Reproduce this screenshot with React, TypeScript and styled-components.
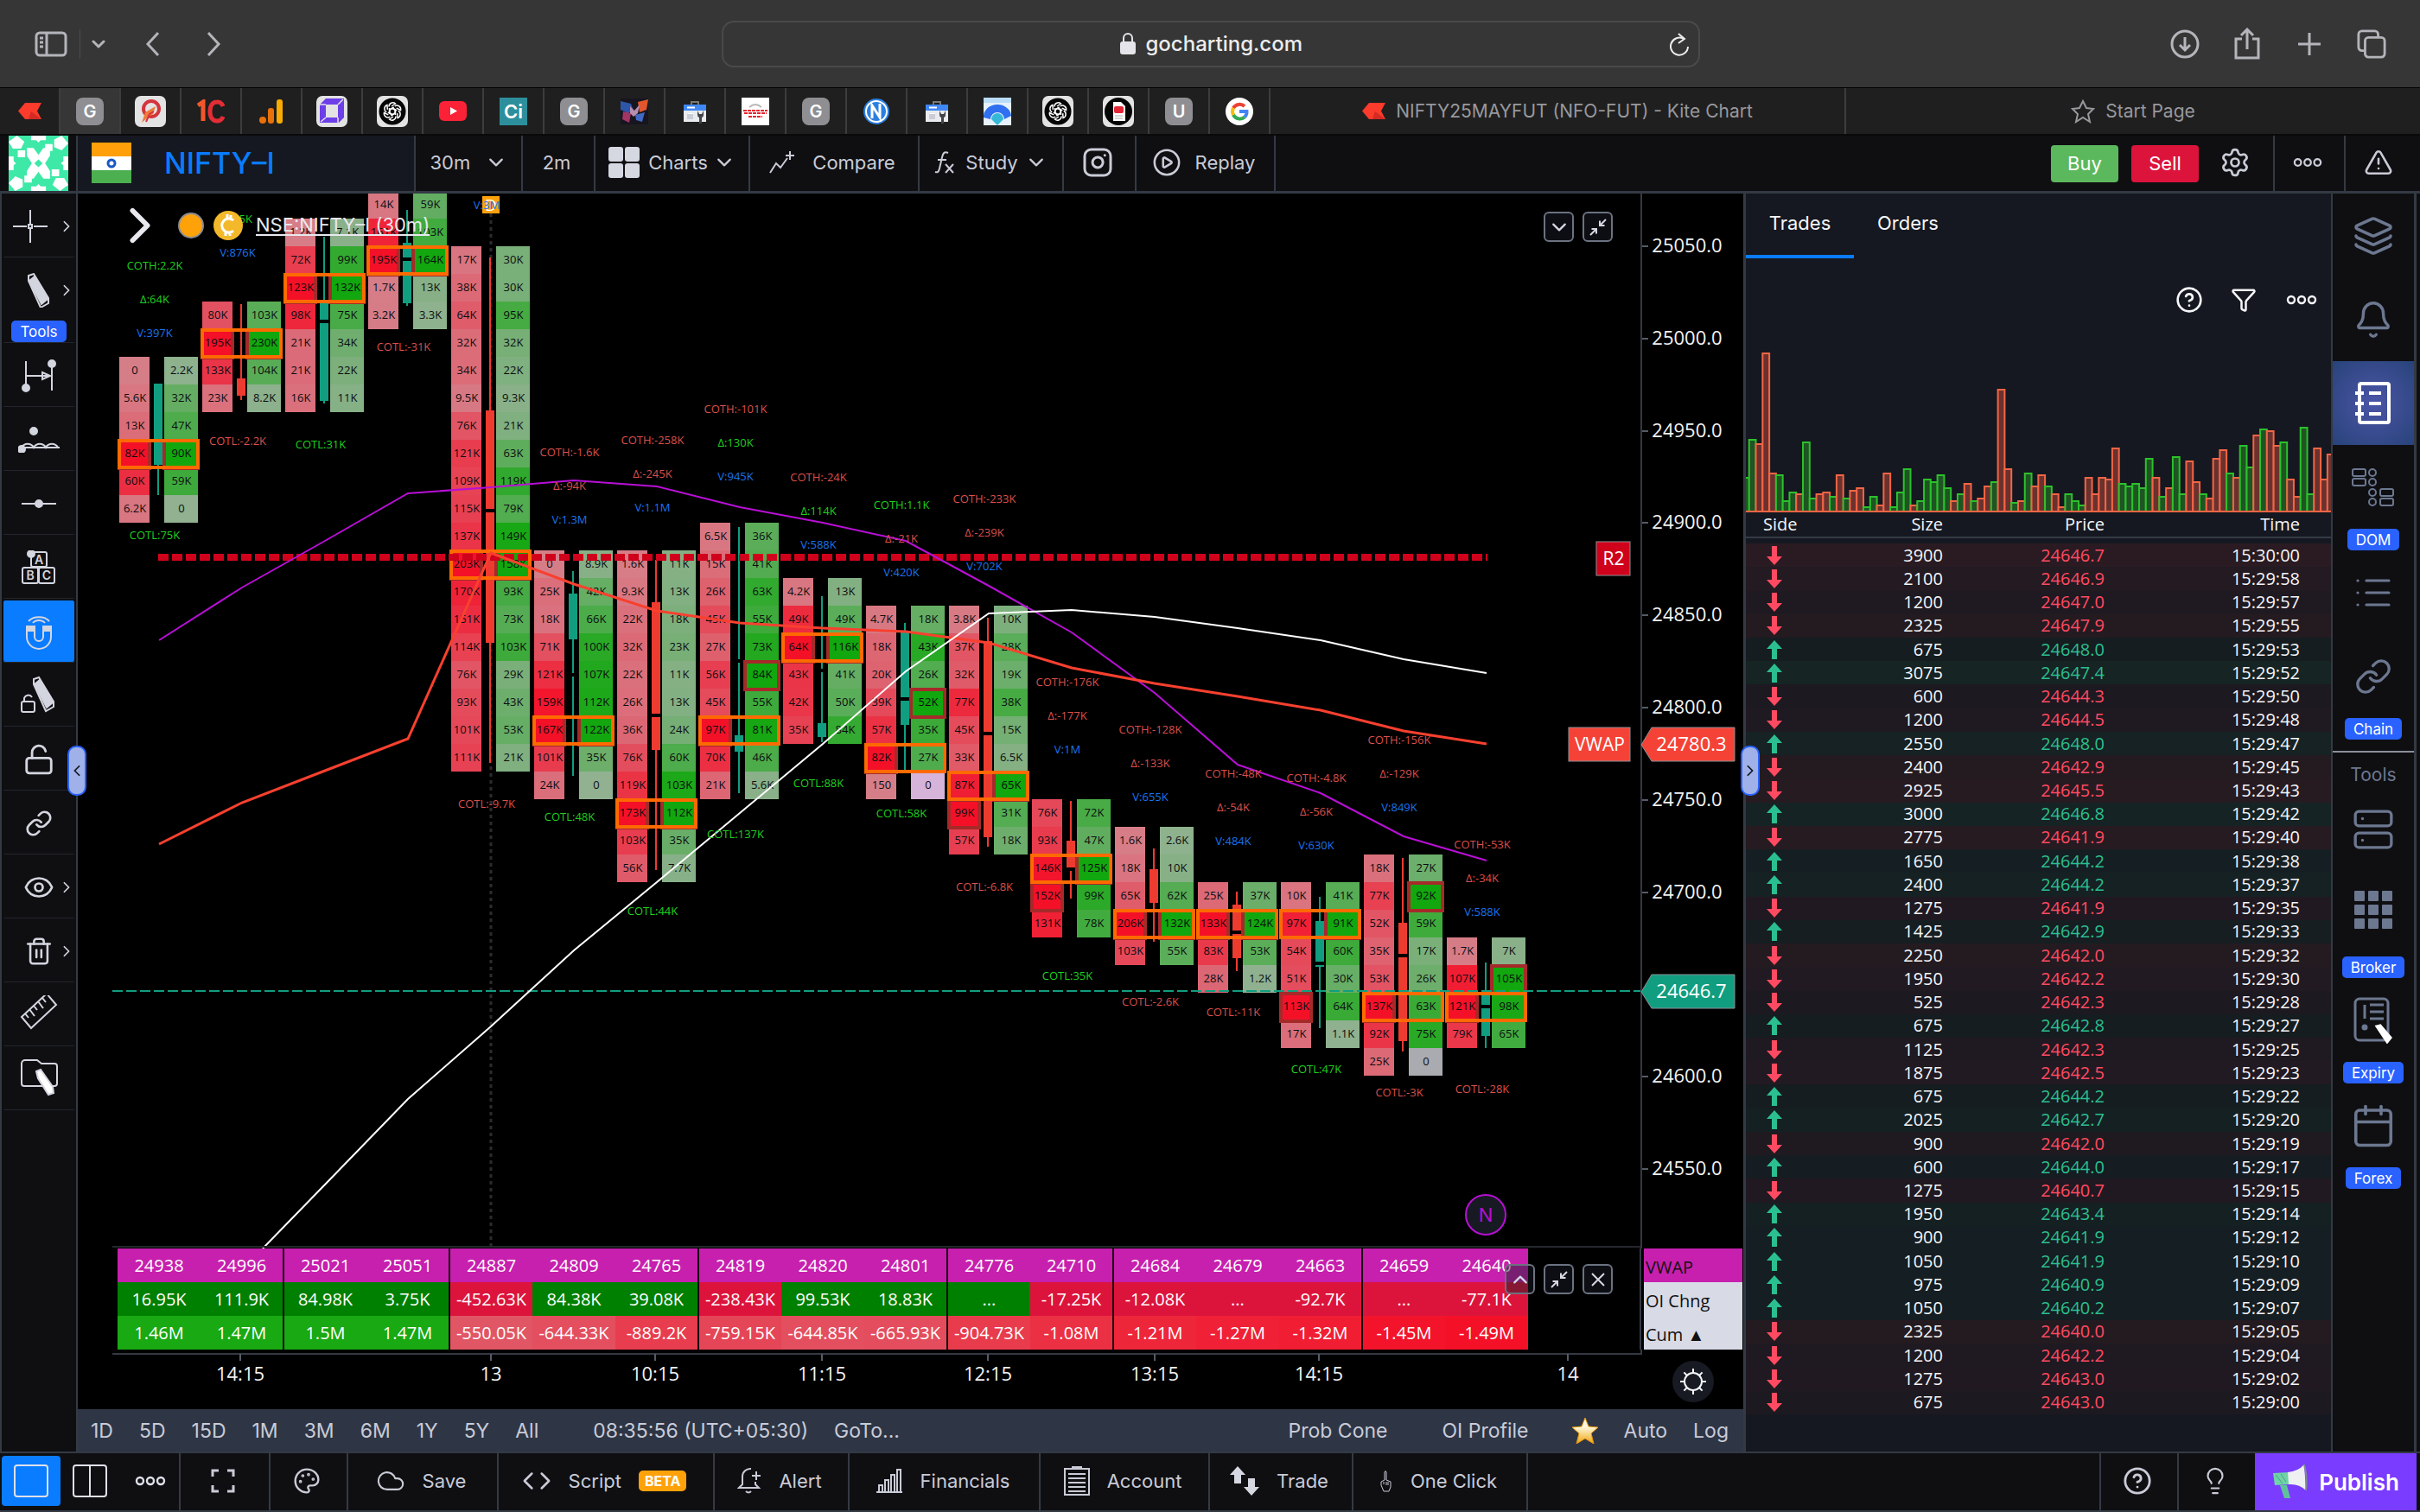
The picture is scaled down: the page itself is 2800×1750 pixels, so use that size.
import React from 'react';
import styled, { createGlobalStyle } from 'styled-components';
import {
  Eye, Trash2, Link, LockOpen, Layers, Bell, List, Server, Calendar, Lightbulb, CircleHelp,
  Funnel, Palette, Cloud, Code, CirclePlay, Settings, TriangleAlert, Instagram,
} from 'lucide-react';

/* ---------- theme ---------- */

const ui = '"Inter", "Liberation Sans", sans-serif';
const data = '"Open Sans", "Noto Sans", sans-serif';

const c = {
  chrome: '#363636',
  tabs: '#1f1f1f',
  panel: '#0f0f12',
  surface: '#151820',
  line: '#343a44',
  thin: '#22262c',
  text: '#c9cbd6',
  white: '#f4f5f8',
  accent: '#0a7cff',
  badge: '#2962ff',
  teal: '#119e80',
  candleRed: '#ee3b30',
  up: '#2bbf8f',
  down: '#ff4a61',
  magenta: '#c71fae',
  orange: '#ff6a00',
  brown: '#a52a2a',
  muted: '#6c7890',
};

const Global = createGlobalStyle`
  * { box-sizing: border-box; }
  body { margin: 0; background: #000; color: ${c.text}; font-family: ${ui}; }
  button, select, input { font: inherit; color: inherit; background: none; border: 0; margin: 0; padding: 0; outline: none; }
  a { color: inherit; text-decoration: none; }
  svg { display: block; }
`;

/* ---------- page frame ---------- */

const Shell = styled.div`
  display: flex;
  flex-direction: column;
  min-height: 100vh;
  background: ${c.panel};
`;

const Workspace = styled.div`
  display: grid;
  grid-template-columns: 90px minmax(0, 1fr) 682px 101px;
  border-top: 3px solid ${c.line};
  flex: 1;
`;

/* ---------- browser chrome ---------- */

const BrowserBar = styled.header`
  display: grid;
  grid-template-columns: 1fr 1132px 1fr;
  align-items: center;
  height: 101px;
  padding: 0 39px 0 40px;
  background: ${c.chrome};
  color: #b4b5ba;
`;

const BarGroup = styled.div<{ $end?: boolean }>`
  display: flex;
  align-items: center;
  justify-content: ${p => (p.$end ? 'flex-end' : 'flex-start')};
  gap: ${p => (p.$end ? 38 : 0)}px;
`;

const BarButton = styled.button<{ $w?: number }>`
  display: flex;
  align-items: center;
  justify-content: center;
  width: ${p => p.$w ?? 34}px;
`;

const BarRule = styled.span`
  width: 1px;
  height: 34px;
  margin: 0 8px 0 14px;
  background: #4c4c4e;
`;

const AddressBox = styled.label`
  display: flex;
  align-items: center;
  height: 54px;
  padding: 0 8px 0 12px;
  border: 2px solid #4a4a4a;
  border-radius: 14px;
  color: #ececee;
`;

const AddressCenter = styled.span`
  display: flex;
  align-items: center;
  justify-content: center;
  gap: 12px;
  flex: 1;
  padding-left: 32px;
`;

const AddressInput = styled.input`
  width: 190px;
  font-size: 24px;
  font-weight: 500;
  line-height: 32px;
`;

const TabStrip = styled.nav`
  display: flex;
  height: 56px;
  border-top: 1px solid #000;
  border-bottom: 2px solid #0a0a0b;
  background: ${c.tabs};
  color: #98989d;
`;

const IconTab = styled.a<{ $on?: boolean }>`
  display: flex;
  flex: 0 0 70px;
  align-items: center;
  justify-content: center;
  border-right: 2px solid #3d3d3f;
  background: ${p => (p.$on ? c.chrome : 'transparent')};
`;

const WideTab = styled.a`
  display: flex;
  flex: 1;
  align-items: center;
  justify-content: center;
  gap: 12px;
  border-right: 2px solid #3d3d3f;
  font-size: 21px;
  &:last-child { border-right: 0; }
`;

const LetterIcon = styled.span<{ $bg: string; $r?: number; $fg?: string; $size?: number }>`
  display: flex;
  align-items: center;
  justify-content: center;
  width: 32px;
  height: 32px;
  border-radius: ${p => p.$r ?? 8}px;
  background: ${p => p.$bg};
  color: ${p => p.$fg ?? '#fff'};
  font-size: ${p => p.$size ?? 20}px;
  font-weight: 600;
`;

/* ---------- app top bar ---------- */

const TopBar = styled.div`
  display: flex;
  height: 64px;
  border-right: 6px solid ${c.panel};
`;

const AvatarCell = styled.div`
  display: flex;
  justify-content: center;
  width: 90px;
  border-right: 2px solid ${c.line};
`;

const SymbolButton = styled.button`
  display: flex;
  align-items: center;
  gap: 38px;
  width: 389px;
  padding: 0 0 2px 16px;
  background: ${c.surface};
  color: ${c.accent};
  font-size: 34px;
  font-weight: 500;
`;

const cellCss = `
  display: flex;
  align-items: center;
  justify-content: center;
  border: 0 solid ${c.line};
  font-size: 22px;
  color: ${c.text};
  white-space: nowrap;
`;

const BarCell = styled.button<{ $w: number; $gap?: number; $plain?: boolean }>`
  ${cellCss}
  flex: 0 0 ${p => p.$w}px;
  gap: ${p => p.$gap ?? 20}px;
  padding: 0 4px 3px 0;
  border-left-width: ${p => (p.$plain ? 0 : 2)}px;
`;

const SelectCell = styled.label`
  ${cellCss}
  flex: 0 0 124px;
  gap: 20px;
  padding: 0 4px 3px 0;
  border-left-width: 2px;
`;

const IntervalSelect = styled.select`
  appearance: none;
`;

const Spacer = styled.div<{ $rule?: boolean }>`
  flex: 1;
  border-left: ${p => (p.$rule ? `2px solid ${c.line}` : '0')};
`;

const OrderGroup = styled.div`
  display: flex;
  align-items: center;
  gap: 15px;
  padding-right: 2px;
`;

const OrderButton = styled.button<{ $bg: string }>`
  width: 78px;
  height: 43px;
  border-radius: 4px;
  background: ${p => p.$bg};
  color: #fff;
  font-size: 22px;
`;

/* ---------- left tool rail ---------- */

const ToolRail = styled.nav`
  display: flex;
  flex-direction: column;
  border-left: 2px solid ${c.line};
  border-right: 2px solid ${c.line};
`;

const ToolCell = styled.button<{ $on?: boolean; $tall?: boolean }>`
  display: grid;
  grid-template-columns: 1fr 44px 1fr;
  grid-template-rows: ${p => (p.$tall ? '1fr 25px' : '1fr')};
  align-items: center;
  justify-items: center;
  height: ${p => (p.$tall ? 99 : 74)}px;
  border: 2px solid ${c.panel};
  border-bottom: 1px solid ${c.thin};
  border-radius: 4px;
  background: ${p => (p.$on ? c.accent : 'transparent')};
  color: #d3d5df;
`;

const Badge = styled.span<{ $span?: boolean }>`
  display: flex;
  align-items: center;
  justify-content: center;
  height: 25px;
  padding: 0 10px;
  border-radius: 5px;
  background: ${c.badge};
  color: #fff;
  font-size: 17px;
  ${p => (p.$span ? 'grid-column: 1 / -1;' : '')}
`;

/* ---------- chart ---------- */

const ChartColumn = styled.section`
  position: relative;
  display: flex;
  flex-direction: column;
  background: #000;
`;

const Plot = styled.svg`
  width: 100%;
  height: auto;
  font-family: ${data};
`;

const ChartLegend = styled.div`
  position: absolute;
  top: 14px;
  left: 49px;
  display: flex;
  align-items: center;
  height: 46px;
  gap: 10px;
  color: #e8e9ef;
  font-size: 22px;
`;

const LegendToggle = styled.button`
  margin-right: 11px;
`;

const LegendLink = styled.a`
  margin-left: 4px;
  border-bottom: 2px solid #e8e9ef;
  line-height: 22px;
  color: #e8e9ef;
`;

const PaneButtons = styled.div<{ $top: number }>`
  position: absolute;
  top: ${p => p.$top}px;
  right: 151px;
  display: flex;
  gap: 10px;
`;

const PaneButton = styled.button`
  display: flex;
  align-items: center;
  justify-content: center;
  width: 35px;
  height: 35px;
  border: 2px solid #6b7280;
  border-radius: 6px;
  background: rgba(27, 32, 42, 0.45);
  color: #d5d8e2;
`;

const RoundButton = styled.button<{ $top: number; $right: number; $note?: boolean }>`
  position: absolute;
  top: ${p => p.$top}px;
  right: ${p => p.$right}px;
  display: flex;
  align-items: center;
  justify-content: center;
  width: 48px;
  height: 48px;
  border: ${p => (p.$note ? '2px solid #b60fd2' : '0')};
  border-radius: 50%;
  background: #171a22;
  color: ${p => (p.$note ? '#b60fd2' : c.white)};
  font-size: 22px;
`;

const Handle = styled.button<{ $side: 'left' | 'right' }>`
  position: absolute;
  top: 639px;
  ${p => p.$side}: ${p => (p.$side === 'left' ? -12 : -19)}px;
  z-index: 2;
  display: flex;
  align-items: center;
  justify-content: center;
  width: 22px;
  height: 58px;
  border: 2px solid ${c.badge};
  border-radius: 10px;
  background: #9fb1e8;
  color: #10131a;
`;

const Strip = styled.div`
  display: flex;
  padding-left: 46px;
`;

const StripTable = styled.table`
  width: 1632px;
  table-layout: fixed;
  border-collapse: collapse;
  font-family: ${data};
  font-size: 20px;
  color: #fff;
`;

const StripCell = styled.td<{ $bg: string; $cut?: boolean }>`
  height: 39px;
  padding: 0;
  text-align: center;
  background: ${p => p.$bg};
  border-right: ${p => (p.$cut ? '2px solid #16060f' : '0')};
`;

const StripGap = styled.div`
  flex: 1;
  border-right: 2px solid ${c.line};
`;

const StripLegend = styled.div`
  width: 118px;
  padding: 0 1px 0 3px;
  font-family: ${data};
  font-size: 20px;
  color: #111;
`;

const StripLabel = styled.div<{ $bg: string }>`
  height: 39px;
  padding: 4px 0 0 2px;
  background: ${p => p.$bg};
  line-height: 35px;
`;

const RangeBar = styled.div`
  display: flex;
  align-items: center;
  height: 49px;
  padding: 0 17px 0 15px;
  background: #2e3646;
  gap: 30px;
`;

const RangeButton = styled.button<{ $before?: number }>`
  margin-left: ${p => p.$before ?? 0}px;
  font-size: 23px;
  line-height: 28px;
  color: ${c.text};
  white-space: nowrap;
`;

/* ---------- trades panel ---------- */

const TradesPanel = styled.section`
  display: flex;
  flex-direction: column;
  border-left: 3px solid ${c.line};
  border-right: 2px solid ${c.line};
  background: ${c.surface};
  color: ${c.white};
`;

const PanelTabs = styled.div`
  display: flex;
  height: 75px;
`;

const PanelTab = styled.button<{ $on?: boolean }>`
  width: 125px;
  padding-bottom: 4px;
  border-bottom: 4px solid ${p => (p.$on ? c.accent : 'transparent')};
  font-size: 22px;
`;

const PanelActions = styled.div`
  display: flex;
  justify-content: flex-end;
  align-items: center;
  gap: 32px;
  height: 96px;
  padding-right: 14px;
`;

const ActionButton = styled.button``;

const Histogram = styled.svg`
  width: 100%;
  height: auto;
`;

const TradesTable = styled.table`
  width: 100%;
  height: 1044px;
  table-layout: fixed;
  border-collapse: collapse;
  font-family: ${data};
`;

const HeadCell = styled.th<{ $w: number; $align: string; $pad?: number }>`
  width: ${p => p.$w}px;
  height: 29px;
  padding: 0 ${p => p.$pad ?? 0}px 0 20px;
  border-bottom: 2px solid ${c.line};
  text-align: ${p => p.$align};
  font-size: 20px;
  font-weight: 400;
  line-height: 26px;
`;

const TradeBody = styled.tbody`
  &::before {
    content: '';
    display: table-row;
    height: 7px;
  }
`;

const TradeRow = styled.tr<{ $buy: boolean; $a: number }>`
  height: 27px;
  background: rgba(${p => (p.$buy ? '38, 166, 91' : '255, 70, 60')}, ${p => p.$a});
`;

const TradeCell = styled.td<{ $color?: string; $pad?: number; $left?: boolean }>`
  padding: 0 ${p => p.$pad ?? 0}px 0 ${p => (p.$left ? 24 : 0)}px;
  text-align: ${p => (p.$left ? 'left' : 'right')};
  color: ${p => p.$color ?? c.white};
  font-size: 20px;
  line-height: 26px;
`;

/* ---------- right rail ---------- */

const SideRail = styled.nav`
  display: flex;
  flex-direction: column;
  align-items: stretch;
  margin-right: 4px;
  border-right: 3px solid ${c.line};
`;

const SideItem = styled.button<{ $after?: number; $gap?: number }>`
  display: flex;
  flex-direction: column;
  align-items: center;
  gap: ${p => p.$gap ?? 0}px;
  padding-bottom: ${p => p.$after ?? 0}px;
  color: ${c.muted};
`;

const SideIcon = styled.span<{ $on?: boolean; $short?: boolean }>`
  display: flex;
  align-items: center;
  justify-content: center;
  width: 100%;
  height: ${p => (p.$short ? 93 : 97)}px;
  color: ${p => (p.$on ? '#fff' : 'inherit')};
  background: ${p => (p.$on ? 'radial-gradient(circle, #4a55a8 0%, #3c4d92 45%, #27437a 100%)' : 'none')};
`;

const SideHeading = styled.div`
  height: 44px;
  border-top: 2px solid #8a8f9a;
  color: ${c.muted};
  font-size: 21px;
  line-height: 52px;
  text-align: center;
`;

/* ---------- bottom bar ---------- */

const BottomBar = styled.footer`
  display: flex;
  height: 70px;
  border-top: 2px solid ${c.line};
  border-bottom: 2px solid ${c.line};
  padding-right: 4px;
`;

const LayoutGroup = styled.div`
  display: flex;
  align-items: center;
  gap: 14px;
  width: 207px;
  padding: 0 0 2px 2px;
`;

const LayoutButton = styled.button<{ $on?: boolean }>`
  display: flex;
  align-items: center;
  justify-content: center;
  width: ${p => (p.$on ? 68 : 40)}px;
  height: 58px;
  border-radius: 4px;
  background: ${p => (p.$on ? c.accent : 'transparent')};
  color: #dfe1ea;
  & + & + & { margin-left: 16px; }
`;

const BetaTag = styled.span`
  padding: 0 7px;
  border-radius: 5px;
  background: #ffa20a;
  color: #fff;
  font-size: 16px;
  font-weight: 700;
  line-height: 24px;
`;

const PublishButton = styled.button`
  display: flex;
  align-items: center;
  justify-content: center;
  gap: 12px;
  flex: 0 0 187px;
  background: #7a3cff;
  color: #fff;
  font-size: 26px;
  font-weight: 600;
`;

/* ---------- small drawings ---------- */

const Chevron = ({ dir = 'down', size = 16, w = 2 }: { dir?: 'down' | 'right' | 'left' | 'up'; size?: number; w?: number }) => {
  const d = { down: 'M2 5l6 6 6-6', up: 'M2 11l6-6 6 6', right: 'M5 2l6 6-6 6', left: 'M11 2l-6 6 6 6' }[dir];
  return (
    <svg width={size} height={size} viewBox="0 0 16 16" fill="none" stroke="currentColor" strokeWidth={w} strokeLinecap="round" strokeLinejoin="round">
      <path d={d} />
    </svg>
  );
};

const Dots = ({ size = 34 }: { size?: number }) => (
  <svg width={size} height="12" viewBox="0 0 36 12" fill="none" stroke="currentColor" strokeWidth="2.4">
    <circle cx="6" cy="6" r="4" /><circle cx="18" cy="6" r="4" /><circle cx="30" cy="6" r="4" />
  </svg>
);

const KiteMark = () => (
  <svg width="27" height="19" viewBox="0 0 27 19"><path d="M8 0h19l-5 9.500L27 19H8L0 9.500z" fill="#fb3b2b" /><path d="M15 10l12 9H12z" fill="#d42a22" /></svg>
);

const Collapse = () => (
  <svg width="22" height="22" viewBox="0 0 22 22" fill="none" stroke="currentColor" strokeWidth="2">
    <path d="M20 2l-7 7M13 3.500V9h5.500M2 20l7-7M9 18.500V13H3.500" />
  </svg>
);

const OpenAi = ({ rays = 6 }: { rays?: number }) => (
  <svg width="36" height="36" viewBox="0 0 36 36">
    <rect width="36" height="36" rx="7" fill="#e3e3e3" /><circle cx="18" cy="18" r="15.500" fill="#050505" />
    <g fill="none" stroke="#fff" strokeWidth="1.500">
      {Array.from({ length: rays }, (_, i) => (
        <path key={i} transform={`rotate(${i * 60} 18 18)`} d="M18 14.500l3.500 2V22M14 12.500a4.500 4.500 0 0 1 7.500-3.500l-4.500 3" />
      ))}
    </g>
  </svg>
);

const StoreMark = () => (
  <svg width="28" height="28" viewBox="0 0 28 28">
    <path d="M10 6V3h8v3" fill="none" stroke="#777" strokeWidth="2" />
    <rect x="1" y="6" width="26" height="20" fill="#e9ebee" /><rect x="1" y="6" width="26" height="7" fill="#3f87f5" />
    <path d="M5 9.500h9M6 17h6M6 20h6" stroke="#fff" strokeWidth="2" /><path d="M5 17v6h7v-6z" fill="#c9ced6" />
    <path d="M17 13v5a3 3 0 0 0 2 3v7h3v-7a3 3 0 0 0 2-3v-5l-2 4h-3z" fill="#404347" />
  </svg>
);

const Avatar = () => (
  <svg width="69" height="64" viewBox="0 0 72 72" preserveAspectRatio="none">
    <rect width="72" height="72" fill="#3ee9a8" />
    {[0, 90, 180, 270].map(r => (
      <g key={r} transform={`rotate(${r} 36 36)`} fill="#fff">
        <path d="M10 0l9 8-4 9H5L0 8zM27 0h18v6H27zM2 30l7 6-7 6zM11 19h9v9h-9z" />
      </g>
    ))}
    <path d="M22 16h8l6 9 6-9h8v10l-6 10 6 10v10h-8l-6-9-6 9h-8V46l6-10-6-10z" fill="#fff" />
    <path d="M36 31l5 5-5 5-5-5z" fill="#3ee9a8" />
  </svg>
);

/* ---------- favicon tabs ---------- */

const favicons: { name: string; icon: React.ReactNode }[] = [
  { name: 'Kite', icon: <KiteMark /> },
  { name: 'GoCharting', icon: <LetterIcon $bg="#8e8e93">G</LetterIcon> },
  { name: 'Moneycontrol', icon: (
    <svg width="36" height="36" viewBox="0 0 36 36"><rect width="36" height="36" rx="7" fill="#e3e3e3" />
      <circle cx="19" cy="15" r="9" fill="none" stroke="#d5343c" strokeWidth="4" /><path d="M8 31l4-12 12-7-3 9-5 3z" fill="#f07a3a" /><path d="M13 30l4-9 5-3" stroke="#d5343c" strokeWidth="2" fill="none" /></svg>) },
  { name: 'Chart', icon: (
    <svg width="32" height="28" viewBox="0 0 32 28" fill="none" strokeWidth="5"><path d="M1 7l6-4v22" stroke="#f2572b" /><path d="M30 8a7 7 0 0 0-7-5c-5 0-8 4-8 11s3 11 8 11a7 7 0 0 0 7-5" stroke="#e42d35" /></svg>) },
  { name: 'Analytics', icon: (
    <svg width="28" height="30" viewBox="0 0 28 30"><rect x="20" y="1" width="7" height="28" rx="3" fill="#f9ab00" /><rect x="10" y="11" width="7" height="18" rx="3" fill="#e8710a" /><circle cx="4" cy="25" r="4" fill="#e8710a" /></svg>) },
  { name: 'Box', icon: (
    <svg width="36" height="36" viewBox="0 0 36 36"><rect width="36" height="36" rx="7" fill="#e3e3e3" /><path d="M11 3h21v22l-6 6H4V10z" fill="#6d3fe8" /><path d="M11 10h14v15H11z" fill="#e3e3e3" /><path d="M4 10l7 0M25 25v6M11 25l-6 5M25 10l6-6" stroke="#e3e3e3" strokeWidth="1.500" /></svg>) },
  { name: 'Chat', icon: <OpenAi /> },
  { name: 'YouTube', icon: (
    <svg width="32" height="23" viewBox="0 0 32 23"><rect width="32" height="23" rx="6" fill="#fb2137" /><path d="M13 7l8 4.500-8 4.500z" fill="#fff" /></svg>) },
  { name: 'Ci', icon: <LetterIcon $bg="#2d8f9c" $r={0} $size={22}>Ci</LetterIcon> },
  { name: 'G', icon: <LetterIcon $bg="#8e8e93">G</LetterIcon> },
  { name: 'Game', icon: (
    <svg width="32" height="30" viewBox="0 0 32 30"><rect width="32" height="30" fill="#17151f" /><path d="M0 3l12 3 3 8-6 3-9-4z" fill="#2d56a8" /><path d="M20 4l12-3-2 12-8 3z" fill="#e0572e" /><path d="M3 15l9 2-2 11-8-4z" fill="#a33565" /><path d="M17 19l11-3-3 11-7-2z" fill="#4069c4" /><path d="M11 9l5 5 6-7-2 10-5 4-4-4z" fill="#b78db0" /></svg>) },
  { name: 'Store', icon: <StoreMark /> },
  { name: 'Job', icon: (
    <svg width="32" height="32" viewBox="0 0 32 32"><rect width="32" height="32" fill="#fff" /><path d="M9 11q7-6 14 0" stroke="#b9b9b9" strokeWidth="2" fill="none" /><path d="M2 15h28M3 18h26M8 22h16" stroke="#e5242c" strokeWidth="2" strokeDasharray="4 1" /></svg>) },
  { name: 'G', icon: <LetterIcon $bg="#8e8e93">G</LetterIcon> },
  { name: 'N', icon: (
    <svg width="32" height="32" viewBox="0 0 32 32"><circle cx="16" cy="16" r="15" fill="#2b7fe0" /><circle cx="16" cy="16" r="12" fill="none" stroke="#fff" strokeWidth="2" /><path d="M11 24V9l9 14V7" fill="none" stroke="#fff" strokeWidth="3" /></svg>) },
  { name: 'Store', icon: <StoreMark /> },
  { name: 'Weather', icon: (
    <svg width="32" height="32" viewBox="0 0 32 32"><rect width="32" height="32" fill="#e6f1fb" /><path d="M0 0h32v6H0z" fill="#b9dcf8" /><path d="M0 23a16 14 0 0 1 32-2l-8 4a8 8 0 0 0-16 0z" fill="#2f6ff0" /><path d="M9 25a7 7 0 0 1 14 0l-7 7z" fill="#35b8d8" /></svg>) },
  { name: 'Chat', icon: <OpenAi /> },
  { name: 'Document', icon: (
    <svg width="36" height="36" viewBox="0 0 36 36"><rect width="36" height="36" rx="7" fill="#e3e3e3" /><circle cx="18" cy="18" r="16" fill="#050505" /><path d="M12 7h9l5 5v17H12z" fill="#fff" /><rect x="13" y="12" width="11" height="8" rx="2" fill="#e32636" /><path d="M14 23h9M14 26h9" stroke="#aaa" /></svg>) },
  { name: 'U', icon: <LetterIcon $bg="#8e8e93">U</LetterIcon> },
  { name: 'Google', icon: (
    <svg width="32" height="32" viewBox="0 0 32 32" fill="none" strokeWidth="4"><circle cx="16" cy="16" r="16" fill="#fff" />
      <path d="M22 10a8.500 8.500 0 0 0-13 2" stroke="#ea4335" /><path d="M9 12a8.500 8.500 0 0 0 0 8" stroke="#fbbc05" /><path d="M9 20a8.500 8.500 0 0 0 13 2.500" stroke="#34a853" /><path d="M22 22.500A8 8 0 0 0 24.500 16H16" stroke="#4285f4" /></svg>) },
];

/* ---------- chart data ---------- */

const K = 1000;
type Candle = { up: boolean; high: number; low: number; top: number; bottom: number; gap?: number };
type Bar = {
  row: number; bids: number[]; asks: number[]; candle: Candle;
  noteY?: number; coth?: string; delta?: string; vol?: string; cotl: [string, number];
};

const bars: Bar[] = [
  { row: 4, bids: [0, 5.6, 13, 82, 60, 6.2], asks: [2.2, 32, 47, 90, 59, 0], candle: { up: true, high: 445, low: 573, top: 444, bottom: 538 }, noteY: 308, coth: '2.2K', delta: '64K', vol: '397K', cotl: ['75K', 620] },
  { row: 2, bids: [80, 195, 133, 23], asks: [103, 230, 104, 8.2], candle: { up: false, high: 352, low: 463, top: 438, bottom: 458 }, noteY: 215, delta: '35K', vol: '876K', cotl: ['-2.2K', 511] },
  { row: -1, bids: [1.2, 72, 123, 98, 21, 21, 16], asks: [7.1, 99, 132, 75, 34, 22, 11], candle: { up: true, high: 274, low: 467, top: 350, bottom: 464, gap: 370 }, cotl: ['31K', 515] },
  { row: -2, bids: [14, 161, 195, 1.7, 3.2], asks: [59, 103, 164, 13, 3.3], candle: { up: true, high: 243, low: 354, top: 281, bottom: 351, gap: 298 }, cotl: ['-31K', 402] },
  { row: 0, bids: [17, 38, 64, 32, 34, 9.5, 76, 121, 109, 115, 137, 203, 170, 151, 114, 76, 93, 101, 111], asks: [30, 30, 95, 32, 22, 9.3, 21, 63, 119, 79, 149, 158, 93, 73, 103, 29, 43, 53, 21], candle: { up: false, high: 298, low: 883, top: 475, bottom: 744, gap: 589 }, noteY: 160, vol: '3M', cotl: ['-9.7K', 931] },
  { row: 11, bids: [0, 25, 18, 71, 121, 159, 167, 101, 24], asks: [8.9, 42, 66, 100, 107, 112, 122, 35, 0], candle: { up: true, high: 661, low: 898, top: 687, bottom: 740, gap: 779 }, noteY: 524, coth: '-1.6K', delta: '-94K', vol: '1.3M', cotl: ['48K', 946] },
  { row: 11, bids: [1.6, 9.3, 22, 32, 22, 26, 36, 76, 119, 173, 103, 56], asks: [11, 13, 18, 23, 11, 13, 24, 60, 103, 112, 35, 7.7], candle: { up: false, high: 648, low: 1007, top: 697, bottom: 868, gap: 826 }, noteY: 510, coth: '-258K', delta: '-245K', vol: '1.1M', cotl: ['44K', 1055] },
  { row: 10, bids: [6.5, 15, 26, 45, 27, 56, 45, 97, 70, 21], asks: [36, 41, 63, 55, 73, 84, 55, 81, 46, 5.6], candle: { up: true, high: 610, low: 918, top: 851, bottom: 870, gap: 763 }, noteY: 474, coth: '-101K', delta: '130K', vol: '945K', cotl: ['137K', 966] },
  { row: 12, bids: [4.2, 49, 64, 43, 42, 35], asks: [13, 49, 116, 41, 50, 84], candle: { up: true, high: 690, low: 859, top: 837, bottom: 853, gap: 774 }, noteY: 553, coth: '-24K', delta: '114K', vol: '588K', cotl: ['88K', 907] },
  { row: 13, bids: [4.7, 18, 20, 39, 57, 82, 0.15], asks: [18, 43, 26, 52, 35, 27, 0], candle: { up: true, high: 721, low: 894, top: 731, bottom: 839, gap: 807 }, noteY: 585, coth: '1.1K', delta: '-21K', vol: '420K', cotl: ['58K', 942] },
  { row: 13, bids: [3.8, 37, 32, 77, 45, 33, 87, 99, 57], asks: [10, 28, 19, 38, 15, 6.5, 65, 31, 18], candle: { up: false, high: 715, low: 980, top: 742, bottom: 969, gap: 847 }, noteY: 578, coth: '-233K', delta: '-239K', vol: '702K', cotl: ['-6.8K', 1027] },
  { row: 20, bids: [76, 93, 146, 152, 131], asks: [72, 47, 125, 99, 78], candle: { up: false, high: 927, low: 1040, top: 973, bottom: 1004, gap: 1004 }, noteY: 790, coth: '-176K', delta: '-177K', vol: '1M', cotl: ['35K', 1130] },
  { row: 21, bids: [1.6, 18, 65, 206, 103], asks: [2.6, 10, 62, 132, 55], candle: { up: false, high: 982, low: 1090, top: 1006, bottom: 1045 }, noteY: 845, coth: '-128K', delta: '-133K', vol: '655K', cotl: ['-2.6K', 1160] },
  { row: 23, bids: [25, 133, 83, 28], asks: [37, 124, 53, 1.2], candle: { up: false, high: 1032, low: 1124, top: 1047, bottom: 1109, gap: 1077 }, noteY: 896, coth: '-48K', delta: '-54K', vol: '484K', cotl: ['-11K', 1172] },
  { row: 23, bids: [10, 97, 54, 51, 113, 17], asks: [41, 91, 60, 30, 64, 1.1], candle: { up: true, high: 1038, low: 1190, top: 1066, bottom: 1119, gap: 1113 }, noteY: 901, coth: '-4.8K', delta: '-56K', vol: '630K', cotl: ['47K', 1238] },
  { row: 22, bids: [18, 77, 52, 35, 53, 137, 92, 25], asks: [27, 92, 59, 17, 26, 63, 75, 0], candle: { up: false, high: 993, low: 1217, top: 1068, bottom: 1205, gap: 1104 }, noteY: 857, coth: '-156K', delta: '-129K', vol: '849K', cotl: ['-3K', 1265] },
  { row: 25, bids: [1.7, 107, 121, 79], asks: [7, 105, 98, 65], candle: { up: true, high: 1114, low: 1213, top: 1147, bottom: 1199, gap: 1163 }, noteY: 978, coth: '-53K', delta: '-34K', vol: '588K', cotl: ['-28K', 1261] },
];

const X0 = 138;
const PITCH = 96;
const Y0 = 285;
const ROW = 32;
const BID_W = 35;
const ASK_X = 52;
const ASK_W = 39;
const MID = 45;

const mix = (a: number[], b: number[], t: number) =>
  `rgb(${a.map((v, i) => Math.round(v + (b[i] - v) * t)).join(',')})`;
const bidColor = (t: number) => mix([214, 126, 136], [244, 17, 40], t);
const askColor = (t: number) => mix([145, 177, 145], [18, 167, 14], t);
const label = (v: number) => (v === 0 ? '0' : v < 1 ? String(v * K) : `${v}K`);
const sign = (s: string) => (s.startsWith('-') ? '#dc4f4b' : '#1fd01f');

const Footprint = ({ bar, i }: { bar: Bar; i: number }) => {
  const x = X0 + PITCH * i;
  const maxBid = Math.max(...bar.bids);
  const maxAsk = Math.max(...bar.asks);
  const totals = bar.bids.map((b, n) => b + bar.asks[n]);
  const poc = totals.indexOf(Math.max(...totals));
  const y = (n: number) => Y0 + (bar.row + n) * ROW;
  const { candle } = bar;
  const tint = candle.up ? c.teal : c.candleRed;
  return (
    <g>
      {bar.bids.map((b, n) => (
        <g key={n}>
          <rect x={x} y={y(n)} width={BID_W} height={ROW} fill={bidColor(b / maxBid)} />
          <rect x={x + ASK_X} y={y(n)} width={ASK_W} height={ROW} fill={b === 0.15 ? '#d6b3d8' : bar.asks[n] === 0 && i === 15 ? '#a9abb0' : askColor(bar.asks[n] / maxAsk)} />
        </g>
      ))}
      <rect x={x} y={y(bar.bids.indexOf(maxBid)) + 1} width={BID_W} height={ROW} fill="none" stroke={c.brown} strokeWidth="4" />
      <rect x={x + ASK_X} y={y(bar.asks.indexOf(maxAsk)) + 1} width={ASK_W} height={ROW} fill="none" stroke={c.brown} strokeWidth="4" />
      <rect x={x + MID - 1} y={candle.high} width="2" height={candle.low - candle.high} fill={tint} />
      <rect x={x + MID - 5} y={candle.top} width="10" height={candle.bottom - candle.top} fill={tint} />
      {candle.gap && <rect x={x + MID - 5} y={candle.gap} width="10" height="4" fill="#000" />}
      <rect x={x} y={y(poc) + 1} width={PITCH - 5} height={ROW - 1} fill="none" stroke={c.orange} strokeWidth="4" />
      <g fontSize="13" fill="#0b0d10" textAnchor="middle">
        {bar.bids.map((b, n) => (
          <React.Fragment key={n}>
            <text x={x + 18} y={y(n) + 20}>{label(b)}</text>
            <text x={x + ASK_X + 20} y={y(n) + 20}>{label(bar.asks[n])}</text>
          </React.Fragment>
        ))}
      </g>
    </g>
  );
};

const Notes = ({ bar, i }: { bar: Bar; i: number }) => {
  const x = X0 + PITCH * i + 41;
  const top = bar.noteY ?? 0;
  return (
    <g fontSize="13" textAnchor="middle">
      {bar.coth && <text x={x} y={top + 4} fill={sign(bar.coth)}>{`COTH:${bar.coth}`}</text>}
      {bar.delta && <text x={x} y={top + 43} fill={sign(bar.delta)}>{`Δ:${bar.delta}`}</text>}
      {bar.vol && <text x={x} y={top + 82} fill="#1a74f0">{`V:${bar.vol}`}</text>}
      <text x={x} y={bar.cotl[1] + 4} fill={sign(bar.cotl[0])}>{`COTL:${bar.cotl[0]}`}</text>
    </g>
  );
};

const series = (ys: number[]) => ys.map((y, i) => `${X0 + MID + 1 + PITCH * i},${y}`).join(' ');
const magentaLine = series([741, 680, 626, 571, 564, 556, 563, 587, 605, 626, 678, 732, 802, 885, 918, 968, 996]);
const vwapLine = series([977, 929, 892, 855, 640, 676, 707, 721, 727, 731, 744, 773, 791, 806, 822, 846, 861]);
const whiteLine = '304,1445 376,1371 472,1272 568,1188 664,1100 760,1021 856,941 952,861 1048,777 1144,710 1240,706 1336,714 1432,727 1528,741 1624,763 1720,779';

const prices = [25050, 25000, 24950, 24900, 24850, 24800, 24750, 24700, 24600, 24550];
const priceY = (p: number) => Math.round(285 + (25050 - p) * 2.136);

const PriceChart = () => (
  <Plot viewBox="90 224 1927 1221" role="img" aria-label="NIFTY-I order flow chart">
    <path d="M568 247V1445" stroke="#2c2c30" strokeWidth="3" strokeDasharray="4 4" />
    {bars.map((b, i) => <Footprint key={i} bar={b} i={i} />)}
    <path d="M183 645H1721" stroke="#d0021b" strokeWidth="8" strokeDasharray="12 4" />
    <path d="M130 1147H1898" stroke={c.teal} strokeWidth="2" strokeDasharray="12 4" />
    <polyline points={magentaLine} fill="none" stroke="#b80fd6" strokeWidth="2" />
    <polyline points={vwapLine} fill="none" stroke="#f8402f" strokeWidth="3" />
    <polyline points={whiteLine} fill="none" stroke="#fff" strokeWidth="2" />
    <rect x="558" y="227" width="20" height="20" fill="#ffa20a" />
    <text x="568" y="244" fontSize="19" textAnchor="middle" fill="#fff">D</text>
    {bars.map((b, i) => <Notes key={i} bar={b} i={i} />)}
    <path d="M1899 224V1445" stroke={c.line} strokeWidth="2" />
    <g fontSize="22" fill="#f2f2f4" textAnchor="middle">
      {prices.map(p => (
        <React.Fragment key={p}>
          <path d={`M1900 ${priceY(p)}h7`} stroke="#555b66" strokeWidth="2" />
          <text x="1952" y={priceY(p) + 7}>{p.toFixed(1)}</text>
        </React.Fragment>
      ))}
    </g>
    <g fontSize="21" fill="#fff" textAnchor="middle" strokeWidth="1">
      <rect x="1847" y="627" width="39" height="39" fill="#d0021b" stroke="#8d8f95" />
      <rect x="1815" y="842" width="71" height="39" fill="#f44336" stroke="#8d8f95" />
      <path d="M1899 862l12-20h96v39h-96z" fill="#f44336" stroke="#8d8f95" />
      <path d="M1899 1148l12-20h96v39h-96z" fill={c.teal} stroke="#8d8f95" />
      <text x="1867" y="654">R2</text>
      <text x="1851" y="869">VWAP</text>
      <text x="1957" y="869" fontSize="22">24780.3</text>
      <text x="1957" y="1155" fontSize="22">24646.7</text>
    </g>
    <path d="M130 1443H1898" stroke="#26282e" strokeWidth="2" />
  </Plot>
);

const stripVwap = [24938, 24996, 25021, 25051, 24887, 24809, 24765, 24819, 24820, 24801, 24776, 24710, 24684, 24679, 24663, 24659, 24640];
const stripOi = ['16.95K', '111.9K', '84.98K', '3.75K', '-452.63K', '84.38K', '39.08K', '-238.43K', '99.53K', '18.83K', '...', '-17.25K', '-12.08K', '...', '-92.7K', '...', '-77.1K'];
const stripCum: [string, number][] = [
  ['1.46M', 1], ['1.47M', 1], ['1.5M', 1], ['1.47M', 1], ['-550.05K', 0.37], ['-644.33K', 0.43], ['-889.2K', 0.6], ['-759.15K', 0.51],
  ['-644.85K', 0.43], ['-665.93K', 0.45], ['-904.73K', 0.61], ['-1.08M', 0.72], ['-1.21M', 0.81], ['-1.27M', 0.85], ['-1.32M', 0.89], ['-1.45M', 0.97], ['-1.49M', 1],
];
const cuts = [1, 3, 6, 9, 11, 14];
const oiGreen = [0, 1, 2, 3, 5, 6, 8, 9, 10];

const OiStrip = () => (
  <Strip>
    <StripTable>
      <tbody>
        <tr>{stripVwap.map((v, i) => <StripCell key={i} $bg={c.magenta} $cut={cuts.includes(i)}>{v}</StripCell>)}</tr>
        <tr>{stripOi.map((v, i) => <StripCell key={i} $bg={oiGreen.includes(i) ? '#008000' : '#dc143c'} $cut={cuts.includes(i)}>{v}</StripCell>)}</tr>
        <tr>{stripCum.map(([v, t], i) => <StripCell key={i} $bg={i < 4 ? '#18a913' : bidColor(t)} $cut={cuts.includes(i)}>{v}</StripCell>)}</tr>
      </tbody>
    </StripTable>
    <StripGap />
    <StripLegend>
      <StripLabel $bg={c.magenta}>VWAP</StripLabel>
      <StripLabel $bg="#d8dae6">OI Chng</StripLabel>
      <StripLabel $bg="#d8dae6">Cum ▲</StripLabel>
    </StripLegend>
  </Strip>
);

const ticks: [number, string][] = [[278, '14:15'], [568, '13'], [758, '10:15'], [951, '11:15'], [1143, '12:15'], [1336, '13:15'], [1526, '14:15'], [1814, '14']];

const TimeAxis = () => (
  <Plot viewBox="90 1562 1927 69">
    <path d="M130 1567H1899V1562" fill="none" stroke={c.line} strokeWidth="2" />
    {ticks.map(([x, t]) => (
      <g key={x}>
        <path d={`M${x} 1567v8`} stroke="#555b66" strokeWidth="2" />
        <text x={x} y="1598" fontSize="22" fill="#f2f2f4" textAnchor="middle">{t}</text>
      </g>
    ))}
  </Plot>
);

/* ---------- trades data ---------- */

const volumes = '39g 83g 78r 183r 44r 42g 12g 22g 20r 80g 15g 20r 22r 17g 42r 15g 24r 27r 5g 17g 7r 44r 5g 22g 49g 7r 12g 37g 34g 42g 27g 12r 20g 32r 12g 15r 29r 34g 141r 49r 10g 12r 44g 29r 42r 29g 20r 5r 20g 12g 7g 39r 20r 39r 37r 73r 32g 29g 32g 27g 61g 39r 17g 27r 63g 20g 58r 34r 20g 15r 61r 71r 44g 39r 76g 51g 88r 95g 93r 76r 80g 37r 17r 97g 20g 73r 37r 66r'.split(' ');

const VolumeBars = () => (
  <Histogram viewBox="0 0 677 198">
    {volumes.map((v, i) => {
      const h = parseInt(v, 10);
      const green = v.endsWith('g');
      const x = -4 + i * 7.78;
      return <rect key={i} x={x} y={197 - h} width="7.78" height={h} fill={green ? '#1f5423' : '#6a322f'} stroke={green ? '#2cc12c' : '#f36545'} strokeWidth="2" />;
    })}
    <path d="M0 197H677" stroke="#f36545" strokeWidth="2" />
  </Histogram>
);

const trades = `3900 24646.7 30:00 d|2100 24646.9 29:58 d|1200 24647.0 29:57 d|2325 24647.9 29:55 d|675 24648.0 29:53 u|3075 24647.4 29:52 u|600 24644.3 29:50 d|1200 24644.5 29:48 d|2550 24648.0 29:47 u|2400 24642.9 29:45 d|2925 24645.5 29:43 d|3000 24646.8 29:42 u|2775 24641.9 29:40 d|1650 24644.2 29:38 u|2400 24644.2 29:37 u|1275 24641.9 29:35 d|1425 24642.9 29:33 u|2250 24642.0 29:32 d|1950 24642.2 29:30 d|525 24642.3 29:28 d|675 24642.8 29:27 u|1125 24642.3 29:25 d|1875 24642.5 29:23 d|675 24644.2 29:22 u|2025 24642.7 29:20 u|900 24642.0 29:19 d|600 24644.0 29:17 u|1275 24640.7 29:15 d|1950 24643.4 29:14 u|900 24641.9 29:12 u|1050 24641.9 29:10 u|975 24640.9 29:09 u|1050 24640.2 29:07 u|2325 24640.0 29:05 d|1200 24642.2 29:04 d|1275 24643.0 29:02 d|675 24643.0 29:00 d`
  .split('|').map(r => r.split(' '));

const SideArrow = ({ up }: { up: boolean }) => (
  <svg width="18" height="22" viewBox="0 0 18 22" fill={up ? c.up : c.down} role="img" aria-label={up ? 'Buy' : 'Sell'}>
    <path d={up ? 'M9 0l9 10h-6v12H6V10H0z' : 'M9 22l9-10h-6V0H6v12H0z'} />
  </svg>
);

const Trades = () => (
  <TradesPanel>
    <PanelTabs>
      <PanelTab $on>Trades</PanelTab>
      <PanelTab>Orders</PanelTab>
    </PanelTabs>
    <PanelActions>
      <ActionButton aria-label="Help"><CircleHelp size={32} strokeWidth={2} /></ActionButton>
      <ActionButton aria-label="Filter"><Funnel size={30} strokeWidth={2} /></ActionButton>
      <ActionButton aria-label="More"><Dots size={40} /></ActionButton>
    </PanelActions>
    <VolumeBars />
    <TradesTable>
      <thead>
        <tr>
          <HeadCell $w={100} $align="left">Side</HeadCell>
          <HeadCell $w={128} $align="right">Size</HeadCell>
          <HeadCell $w={187} $align="right">Price</HeadCell>
          <HeadCell $w={262} $align="right" $pad={36}>Time</HeadCell>
        </tr>
      </thead>
      <TradeBody>
        {trades.map(([size, price, time, side], i) => (
          <TradeRow key={i} $buy={side === 'u'} $a={Math.min(0.09, 0.02 + Number(size) / 50000)}>
            <TradeCell $left><SideArrow up={side === 'u'} /></TradeCell>
            <TradeCell>{size}</TradeCell>
            <TradeCell $color={side === 'u' ? c.up : c.down}>{price}</TradeCell>
            <TradeCell $pad={36}>{`15:${time}`}</TradeCell>
          </TradeRow>
        ))}
      </TradeBody>
    </TradesTable>
  </TradesPanel>
);

/* ---------- tool icons ---------- */

const Stroke = ({ w = 40, h = 40, sw = 2, box, children }: { w?: number; h?: number; sw?: number; box?: string; children: React.ReactNode }) => (
  <svg width={w} height={h} viewBox={box ?? `0 0 ${w} ${h}`} fill="none" stroke="currentColor" strokeWidth={sw}>{children}</svg>
);

const Pencil = () => <><path d="M2 9V3l6-2 17 28v6l-9 5z" /><path d="M3 9l6-5 15 26-7 6z" fill="currentColor" /></>;

const tools: { name: string; icon: React.ReactNode; more?: boolean; on?: boolean; tag?: string }[] = [
  { name: 'Crosshair', more: true, icon: <Stroke w={60} h={40}><path d="M0 20h16M24 20h16M20 1v16M20 23v16" /><rect x="18" y="18" width="4" height="4" /></Stroke> },
  { name: 'Pencil', more: true, tag: 'Tools', icon: <Stroke w={28} h={40} sw={2}><Pencil /></Stroke> },
  { name: 'Measure', icon: <Stroke><path d="M5 3v34M35 3v34M5 20h26M24 16l9 4-9 4z" /><circle cx="5" cy="34" r="4" fill="currentColor" /><circle cx="35" cy="6" r="4" fill="currentColor" /></Stroke> },
  { name: 'Waves', icon: <Stroke w={48} h={30}><path d="M4 24h44M4 24a8 8 0 0 1 14 0 8 8 0 0 1 14 0 8 8 0 0 1 14 0" /><circle cx="4" cy="26" r="4" fill="currentColor" /><circle cx="18" cy="5" r="4" fill="currentColor" /></Stroke> },
  { name: 'Horizontal line', icon: <Stroke w={40} h={12}><path d="M0 6h40" /><circle cx="20" cy="6" r="4" fill="currentColor" /></Stroke> },
  { name: 'Text', icon: (
    <Stroke w={40} h={40}><rect x="11" y="2" width="18" height="17" rx="2" /><rect x="1" y="20" width="18" height="18" rx="2" /><rect x="20" y="20" width="18" height="18" rx="2" /><circle cx="11" cy="4" r="4" fill="currentColor" />
      <g fill="currentColor" stroke="none" fontSize="14" fontWeight="600" textAnchor="middle" fontFamily="Inter, sans-serif"><text x="20" y="16">A</text><text x="10" y="34">B</text><text x="29" y="34">C</text></g></Stroke>) },
  { name: 'Magnet', on: true, icon: <Stroke w={32} h={44} sw={2}><path d="M2 16v12a14 14 0 0 0 28 0V16h-9v12a5 5 0 0 1-10 0V16zM4 10a14 10 0 0 1 24 0M9 12a8 6 0 0 1 14 0" /><path d="M2 17h9v4H2zM21 17h9v4h-9z" fill="currentColor" /></Stroke> },
  { name: 'Lock drawing', icon: <Stroke w={42} h={46}><g transform="translate(13 1)"><Pencil /></g><rect x="1" y="30" width="15" height="12" rx="2" /><path d="M4 30v-4a5 5 0 0 1 9-1" /></Stroke> },
  { name: 'Unlock', icon: <LockOpen size={38} strokeWidth={1.8} /> },
  { name: 'Link', icon: <Link size={32} strokeWidth={2} /> },
  { name: 'Visibility', more: true, icon: <Eye size={36} strokeWidth={1.8} /> },
  { name: 'Delete', more: true, icon: <Trash2 size={34} strokeWidth={1.8} /> },
  { name: 'Ruler', icon: <Stroke w={44} h={46} box="0 4 44 46"><path d="M2 29L31 2l11 13-29 27zM6 25l4 5M11 20l6 8M16 16l4 5M21 11l6 8M26 7l4 5" /></Stroke> },
  { name: 'Notes', icon: <Stroke w={44} h={50} box="0 0 44 50"><path d="M2 7a4 4 0 0 1 4-4h14l5 4h15a3 3 0 0 1 3 3v20a3 3 0 0 1-3 3H5a3 3 0 0 1-3-3z" /><path d="M19 16l5-2 14 20 1 7-6 2-12-19z" fill="#fff" /></Stroke> },
];

/* ---------- app ---------- */

const ranges = ['1D', '5D', '15D', '1M', '3M', '6M', '1Y', '5Y', 'All'];

export default function App() {
  return (
    <Shell>
      <Global />
      <BrowserBar>
        <BarGroup>
          <BarButton $w={38} aria-label="Sidebar">
            <Stroke w={38} h={30} sw={3}><rect x="2" y="2" width="34" height="26" rx="4" /><path d="M14 2v26M6 8h4M6 13h4M6 18h4" /></Stroke>
          </BarButton>
          <BarRule />
          <BarButton $w={26} aria-label="Tab groups"><Chevron w={3} /></BarButton>
          <BarButton $w={100} aria-label="Back"><Stroke w={18} h={30} sw={3}><path d="M15 2L3 15l12 13" /></Stroke></BarButton>
          <BarButton $w={40} aria-label="Forward"><Stroke w={18} h={30} sw={3}><path d="M3 2l12 13L3 28" /></Stroke></BarButton>
        </BarGroup>
        <AddressBox>
          <AddressCenter>
            <svg width="18" height="26" viewBox="0 0 18 26"><rect y="10" width="18" height="15" rx="3" fill="#e4e4ea" /><path d="M4 11V6a5 5 0 0 1 10 0v5" fill="none" stroke="#e4e4ea" strokeWidth="2" /></svg>
            <AddressInput defaultValue="gocharting.com" aria-label="Address" />
          </AddressCenter>
          <BarButton $w={26} aria-label="Reload"><Stroke w={24} h={28} sw={2}><path d="M16 8a10 10 0 1 0 5 9M10 2l7 6-7 5" /></Stroke></BarButton>
        </AddressBox>
        <BarGroup $end>
          <BarButton aria-label="Downloads"><Stroke w={34} h={34} sw={3}><circle cx="17" cy="17" r="15" /><path d="M17 9v15M11 18l6 6 6-6" /></Stroke></BarButton>
          <BarButton aria-label="Share"><Stroke w={32} h={38} sw={3}><path d="M10 13H3v22h26V13h-7M16 25V3M9 9l7-7 7 7" /></Stroke></BarButton>
          <BarButton aria-label="New tab"><Stroke w={28} h={28} sw={3}><path d="M14 1v26M1 14h26" /></Stroke></BarButton>
          <BarButton aria-label="Tab overview"><Stroke w={36} h={36} sw={3}><rect x="10" y="10" width="24" height="24" rx="4" /><path d="M10 26H6a4 4 0 0 1-4-4V6a4 4 0 0 1 4-4h16a4 4 0 0 1 4 4v4" /></Stroke></BarButton>
        </BarGroup>
      </BrowserBar>

      <TabStrip>
        {favicons.map((f, i) => <IconTab key={i} href="#" $on={i === 1} aria-label={f.name}>{f.icon}</IconTab>)}
        <WideTab href="#"><KiteMark />NIFTY25MAYFUT (NFO-FUT) - Kite Chart</WideTab>
        <WideTab href="#"><Stroke w={28} h={28} sw={2}><path d="M14 2l4 8 8 1-6 6 2 9-8-5-8 5 2-9-6-6 8-1z" /></Stroke>Start Page</WideTab>
      </TabStrip>

      <TopBar>
        <AvatarCell><Avatar /></AvatarCell>
        <SymbolButton>
          <svg width="46" height="47" viewBox="0 0 46 47"><path d="M0 0h46v16H0z" fill="#ff9f0a" /><path d="M0 16h46v16H0z" fill="#fff" /><path d="M0 32h46v15H0z" fill="#4caf50" /><circle cx="23" cy="24" r="4" fill="none" stroke="#1a56c8" strokeWidth="3" /></svg>
          NIFTY–I
        </SymbolButton>
        <SelectCell>
          <IntervalSelect aria-label="Interval"><option>30m</option></IntervalSelect>
          <Chevron size={18} />
        </SelectCell>
        <BarCell $w={84}>2m</BarCell>
        <BarCell $w={179} $gap={10}>
          <svg width="36" height="36" viewBox="0 0 36 36" fill="#d5d7e1"><rect width="17" height="17" rx="3" /><rect x="19" width="17" height="17" rx="3" /><rect y="19" width="17" height="17" rx="3" /><rect x="19" y="19" width="17" height="17" rx="3" /></svg>
          Charts
          <Chevron size={18} />
        </BarCell>
        <BarCell $w={196}>
          <Stroke w={30} h={28} sw={2}><path d="M1 26l7-11 5 5 8-11M24 1v10M19 6h10" /></Stroke>
          Compare
        </BarCell>
        <BarCell $w={167} $gap={12}>
          <Stroke w={24} h={28} sw={2}><path d="M16 3c-4-2-6 0-7 5L6 21c-1 4-2 5-5 4M4 11h10M13 16l9 10M22 16l-9 10" /></Stroke>
          Study
          <Chevron size={18} />
        </BarCell>
        <BarCell $w={84} aria-label="Snapshot"><Instagram size={36} strokeWidth={2} /></BarCell>
        <BarCell $w={161} $gap={16}><CirclePlay size={34} strokeWidth={1.800} />Replay</BarCell>
        <Spacer $rule />
        <OrderGroup>
          <OrderButton $bg="#5cb85c">Buy</OrderButton>
          <OrderButton $bg="#dc143c">Sell</OrderButton>
        </OrderGroup>
        <BarCell $w={84} $plain aria-label="Settings"><Settings size={36} strokeWidth={1.800} /></BarCell>
        <BarCell $w={82} aria-label="More"><Dots /></BarCell>
        <BarCell $w={82} aria-label="Warnings"><TriangleAlert size={34} strokeWidth={1.800} /></BarCell>
      </TopBar>

      <Workspace>
        <ToolRail>
          {tools.map(t => (
            <ToolCell key={t.name} aria-label={t.name} $on={t.on} $tall={!!t.tag}>
              <span />
              {t.icon}
              {t.more ? <Chevron dir="right" size={14} /> : <span />}
              {t.tag && <Badge $span>{t.tag}</Badge>}
            </ToolCell>
          ))}
        </ToolRail>

        <ChartColumn>
          <PriceChart />
          <OiStrip />
          <TimeAxis />
          <RangeBar>
            {ranges.map(r => <RangeButton key={r}>{r}</RangeButton>)}
            <RangeButton $before={33}>08:35:56 (UTC+05:30)</RangeButton>
            <RangeButton>GoTo...</RangeButton>
            <Spacer />
            <RangeButton>Prob Cone</RangeButton>
            <RangeButton $before={33}>OI Profile</RangeButton>
            <RangeButton $before={20} aria-label="Favourite">
              <svg width="30" height="30" viewBox="0 0 30 30"><defs><linearGradient id="gold" x1="0" y1="0" x2="0" y2="1"><stop offset=".35" stopColor="#fff8dc" /><stop offset="1" stopColor="#eea50c" /></linearGradient></defs><path d="M15 0l4 10 11 1-8 7 3 12-10-6-10 6 3-12-8-7 11-1z" fill="url(#gold)" stroke="#e8960a" strokeWidth="1" /></svg>
            </RangeButton>
            <RangeButton>Auto</RangeButton>
            <RangeButton>Log</RangeButton>
          </RangeBar>
          <ChartLegend>
            <LegendToggle aria-label="Toggle legend"><Chevron dir="right" size={46} w={2} /></LegendToggle>
            <svg width="30" height="30" viewBox="0 0 30 30"><circle cx="15" cy="15" r="14" fill="#ffa20a" stroke="#8b8d92" strokeWidth="2" /></svg>
            <svg width="36" height="36" viewBox="0 0 36 36"><circle cx="18" cy="18" r="17" fill="#f3b92b" /><path d="M24 12a8 8 0 1 0 0 12M17 5v5M21 6v4M15 26v4M20 26v4" fill="none" stroke="#fff" strokeWidth="3" /></svg>
            <LegendLink href="#">NSE:NIFTY–I (30m)</LegendLink>
          </ChartLegend>
          <PaneButtons $top={21}>
            <PaneButton aria-label="Collapse"><Chevron size={18} /></PaneButton>
            <PaneButton aria-label="Minimise"><Collapse /></PaneButton>
          </PaneButtons>
          <PaneButtons $top={1239}>
            <PaneButton aria-label="Move up"><Chevron dir="up" size={18} /></PaneButton>
            <PaneButton aria-label="Minimise"><Collapse /></PaneButton>
            <PaneButton aria-label="Close"><Stroke w={18} h={18}><path d="M2 2l14 14M16 2L2 16" /></Stroke></PaneButton>
          </PaneButtons>
          <RoundButton $top={1158} $right={274} $note>N</RoundButton>
          <RoundButton $top={1351} $right={34} aria-label="Theme">
            <Stroke w={32} h={32}><circle cx="16" cy="16" r="10" />{[0, 45, 90, 135, 180, 225, 270, 315].map(a => <path key={a} d="M16 6V1" transform={`rotate(${a} 16 16)`} />)}</Stroke>
          </RoundButton>
          <Handle $side="left" aria-label="Hide tools"><Chevron dir="left" size={14} /></Handle>
          <Handle $side="right" aria-label="Hide panel"><Chevron dir="right" size={14} /></Handle>
        </ChartColumn>

        <Trades />

        <SideRail>
          <SideItem aria-label="Layers"><SideIcon><Layers size={48} strokeWidth={1.800} /></SideIcon></SideItem>
          <SideItem aria-label="Alerts"><SideIcon><Bell size={46} strokeWidth={1.800} /></SideIcon></SideItem>
          <SideItem aria-label="Trades"><SideIcon $on>
            <Stroke w={42} h={50} sw={4}><rect x="5" y="2" width="34" height="45" rx="2" /><path d="M0 13h10M0 25h10M0 37h10M16 13h14M16 25h14M16 37h14" /></Stroke>
          </SideIcon></SideItem>
          <SideItem>
            <SideIcon><Stroke w={50} h={46} sw={2}><rect x="1" y="2" width="15" height="8" rx="2" /><rect x="1" y="13" width="15" height="8" rx="2" /><rect x="33" y="25" width="15" height="8" rx="2" /><rect x="33" y="36" width="15" height="8" rx="2" /><circle cx="24" cy="6" r="4" /><circle cx="24" cy="17" r="4" /><circle cx="24" cy="29" r="4" /><circle cx="24" cy="40" r="4" /></Stroke></SideIcon>
            <Badge>DOM</Badge>
          </SideItem>
          <SideItem aria-label="Watchlist"><SideIcon><List size={48} strokeWidth={1.600} /></SideIcon></SideItem>
          <SideItem $after={13}><SideIcon><Link size={44} strokeWidth={1.800} /></SideIcon><Badge>Chain</Badge></SideItem>
          <SideHeading>Tools</SideHeading>
          <SideItem aria-label="Servers"><SideIcon $short><Server size={50} strokeWidth={1.600} /></SideIcon></SideItem>
          <SideItem $gap={8}>
            <SideIcon $short><svg width="44" height="44" viewBox="0 0 44 44" fill="currentColor">{[0, 16, 32].map(y => [0, 16, 32].map(x => <rect key={`${x}-${y}`} x={x} y={y} width="12" height="12" rx="1" />))}</svg></SideIcon>
            <Badge>Broker</Badge>
          </SideItem>
          <SideItem>
            <SideIcon><Stroke w={46} h={54} sw={3}><rect x="2" y="2" width="38" height="48" rx="5" /><path d="M13 9v16M19 9h16M19 17h16M19 25h16" /><circle cx="13" cy="35" r="2" fill="currentColor" /><path d="M27 34l4-1 12 14-4 5z" fill="#fff" stroke="#fff" /></Stroke></SideIcon>
            <Badge>Expiry</Badge>
          </SideItem>
          <SideItem><SideIcon><Calendar size={54} strokeWidth={1.600} /></SideIcon><Badge>Forex</Badge></SideItem>
        </SideRail>
      </Workspace>

      <BottomBar>
        <LayoutGroup>
          <LayoutButton $on aria-label="Single layout"><Stroke w={40} h={38} sw={2}><rect x="1" y="1" width="38" height="36" rx="3" /></Stroke></LayoutButton>
          <LayoutButton aria-label="Split layout"><Stroke w={40} h={38} sw={2}><rect x="1" y="1" width="38" height="36" rx="3" /><path d="M20 1v36" /></Stroke></LayoutButton>
          <LayoutButton aria-label="More layouts"><Dots size={40} /></LayoutButton>
        </LayoutGroup>
        <BarCell $w={104} aria-label="Fullscreen"><Stroke w={28} h={28} sw={3}><path d="M2 9V2h7M19 2h7v7M26 19v7h-7M9 26H2v-7" /></Stroke></BarCell>
        <BarCell $w={90} aria-label="Palette"><Palette size={32} strokeWidth={1.800} /></BarCell>
        <BarCell $w={174}><Cloud size={34} strokeWidth={1.500} />Save</BarCell>
        <BarCell $w={250}><Code size={34} strokeWidth={1.800} />Script<BetaTag>BETA</BetaTag></BarCell>
        <BarCell $w={156}><Stroke w={28} h={32}><path d="M16 2a9 9 0 0 0-10 9v9l-4 4h23l-4-4v-3M10 28q3 3 6 0M22 5v10M17 10h10" /></Stroke>Alert</BarCell>
        <BarCell $w={221}><Stroke w={32} h={30} sw={2}><path d="M1 28h30M4 28v-8h4v8M11 28V14h4v14M18 28V8h4v20M25 28V2h4v26" /></Stroke>Financials</BarCell>
        <BarCell $w={196}><Stroke w={30} h={36} sw={2}><rect x="1" y="4" width="28" height="30" /><path d="M9 2h12M5 10h20M5 15h20M5 20h20M5 25h20M5 30h20" /></Stroke>Account</BarCell>
        <BarCell $w={166}><svg width="34" height="34" viewBox="0 0 34 34" fill="#d5d7e1"><path d="M9 0l9 10h-5v10H5V10H0zM25 34l-9-10h5V14h8v10h5z" /></svg>Trade</BarCell>
        <BarCell $w={202}><Stroke w={16} h={26} sw={1}><path d="M6 12V3q1-3 2 0v9l5 2v6l-2 5H5l-3-7v-4zM8 14v4M10 14v4M5 14v3" /></Stroke>One Click</BarCell>
        <Spacer $rule />
        <BarCell $w={90} aria-label="Help"><CircleHelp size={34} strokeWidth={2} /></BarCell>
        <BarCell $w={90} aria-label="Ideas"><Lightbulb size={34} strokeWidth={1.500} /></BarCell>
        <PublishButton>
          <svg width="42" height="40" viewBox="0 0 42 40"><path d="M9 24l5 15h7l-4-15z" fill="#5fc39a" /><path d="M1 10l19-1v14L3 24z" fill="#6fd3a8" /><path d="M18 9q12-1 19-9l2 30q-8-8-20-7z" fill="#eef0f2" /><path d="M37 0q4 14 2 30" stroke="#7e8891" strokeWidth="2" fill="none" /><path d="M4 12l8 10M10 11l6 9" stroke="#4aa581" /></svg>
          Publish
        </PublishButton>
      </BottomBar>
    </Shell>
  );
}
